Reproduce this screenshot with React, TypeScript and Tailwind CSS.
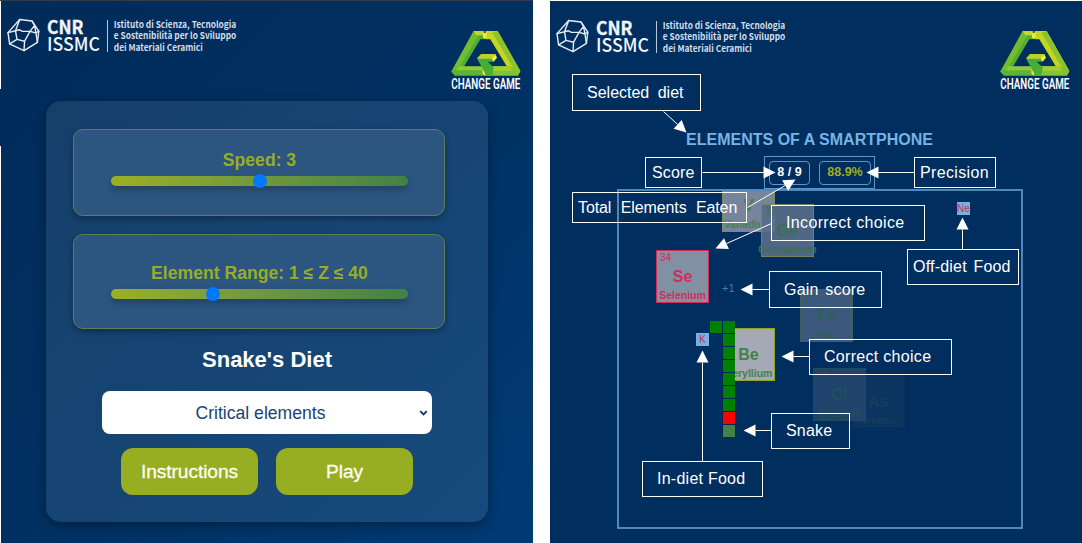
import React from "react";

function CnrLogo() {
  return (
    <svg width="240" height="56" viewBox="0 0 240 56" className="block overflow-visible">
      <g fill="none" stroke="#e6edf5" strokeWidth="1.4" strokeLinejoin="round" strokeLinecap="round">
        <path d="M19.7 19.5 32 21 38.8 31.2 37.4 42.3 24 50.6 9.6 43.8 8 32.6Z" />
        <path d="M19.7 19.5 15.5 30.8 8 32.6M15.5 30.8 19.5 29.8 22 31.2 30 31.4 34.6 25.4 32 21M34.6 25.4 36 33 38.8 31.2M36 33 30 31.4M36 33 37.4 42.3M15.5 30.8 17 39.4 9.6 43.8M17 39.4 24.6 41.2 24 50.6M24.6 41.2 30 31.4" />
      </g>
      <g fill="#f2f6fa" fontFamily="'Noto Sans CJK SC', 'Open Sans', sans-serif">
        <text x="47" y="34.3" fontSize="18.5" fontWeight="700" stroke="#f2f6fa" strokeWidth="0.3" textLength="36.5" lengthAdjust="spacingAndGlyphs">CNR</text>
        <text x="47" y="51" fontSize="18.5" fontWeight="500" textLength="53" lengthAdjust="spacingAndGlyphs">ISSMC</text>
        <g fontSize="9.3" fontWeight="700" fill="#d3deea">
          <text x="113.8" y="27.8" textLength="122.5" lengthAdjust="spacingAndGlyphs">Istituto di Scienza, Tecnologia</text>
          <text x="113.8" y="39.4" textLength="122.5" lengthAdjust="spacingAndGlyphs">e Sostenibilità per lo Sviluppo</text>
          <text x="113.8" y="51" textLength="89" lengthAdjust="spacingAndGlyphs">dei Materiali Ceramici</text>
        </g>
      </g>
      <path d="M107.5 20V52" stroke="#b9c8d9" strokeWidth="1" />
    </svg>
  );
}

function ChangeGameLogo() {
  return (
    <svg width="74" height="62" viewBox="0 0 222 186" className="block overflow-visible">
      <path d="M68 3H100V28H88L40 108 13 137 1 125Z" fill="#4fb034" />
      <path d="M68 3 84 12 14 132 1 125Z" fill="#72bd2e" />
      <path d="M68 3H98L94 16H76Z" fill="#c9d52b" />
      <path d="M104 3H140L208 123 200 137 176 110H168L118 28H104Z" fill="#c5d620" />
      <path d="M140 3 208 123 200 137 124 8Z" fill="#8cc32c" />
      <path d="M94 5 101 10 108 5 106 24 101 28 96 22Z" fill="#f5e83a" />
      <path d="M1 125 24 110H100L104 137H13Z" fill="#5bb432" />
      <path d="M26 109H96L100 121H14Z" fill="#90c83a" />
      <path d="M112 109H176L208 123 200 137H104Z" fill="#84c331" />
      <path d="M124 109H176L186 122H120Z" fill="#a4cf32" />
      <path d="M94 118 104 112 108 126 102 137 95 132Z" fill="#f0e32f" />
      <path d="M78 85 88 78H126L128 95H110L128 112 124 137H106Z" fill="#46ae36" />
      <path d="M78 85 90 72H133L125 86H84Z" fill="#bdd02c" />
      <path d="M133 72 138 83 128 95 122 86Z" fill="#f7ec3d" />
      <text x="1" y="177" fontSize="45" fontWeight="600" fill="#ffffff" fontFamily="Roboto, sans-serif" textLength="207" lengthAdjust="spacingAndGlyphs">CHANGE GAME</text>
    </svg>
  );
}

function Slider({ at }: { at: number }) {
  return (
    <div className="relative h-[9.5px] w-[297px] rounded-full bg-linear-to-r from-[#9bb021] to-[#428147] shadow-[0_4px_6px_rgba(0,0,0,0.22)]">
      <div className="absolute top-[-2.2px] size-[14px] -translate-x-1/2 rounded-full bg-[#0079ff]" style={{ left: at }} />
    </div>
  );
}

function Tile({ className, n, symbol, name }: { className: string; n?: number; symbol: string; name: string }) {
  return (
    <div className={"absolute flex size-[53px] flex-col items-center border-[1.5px] font-bold " + className}>
      <div className="h-[14px] w-full pl-[3px] text-[10px] font-normal leading-[13px]">{n}</div>
      <div className="flex h-[23px] items-center text-[16px] leading-none">{symbol}</div>
      <div className="whitespace-nowrap text-[10.5px] leading-[14px]">{name}</div>
    </div>
  );
}

function Label({ className, children }: { className: string; children: React.ReactNode }) {
  return (
    <div className={"absolute flex items-center whitespace-nowrap border border-white text-[16px] leading-none text-white " + className}>
      {children}
    </div>
  );
}

const snake = [
  "bg-[#008000]",
  "bg-[#008000]",
  "bg-[#008000]",
  "bg-[#008000]",
  "bg-[#008000]",
  "bg-[#008000]",
  "bg-[#008000]",
  "bg-[#ff0000]",
  "bg-[#428148]",
];

const arrows: [number, number, number, number][] = [
  [663, 111, 686, 132],
  [702, 172, 775, 172],
  [914, 172, 866, 172],
  [747, 207, 795, 179],
  [771, 223, 715, 248],
  [769, 289, 740, 289],
  [809, 356, 781, 356],
  [771, 430, 743, 430],
  [702, 461, 702, 350],
  [962, 249, 962, 217],
];

function Arrows() {
  return (
    <svg className="pointer-events-none absolute inset-0" width="1082" height="543" viewBox="0 0 1082 543">
      {arrows.map(([x1, y1, x2, y2], i) => {
        const d = Math.hypot(x2 - x1, y2 - y1);
        const ux = (x2 - x1) / d;
        const uy = (y2 - y1) / d;
        const bx = x2 - ux * 12;
        const by = y2 - uy * 12;
        return (
          <g key={i} transform="translate(0.5 0.5)">
            <path d={`M${x1} ${y1}L${bx} ${by}`} stroke="#fff" strokeWidth="1" />
            <path d={`M${x2} ${y2}L${bx - uy * 6} ${by + ux * 6}L${bx + uy * 6} ${by - ux * 6}Z`} fill="#fff" />
          </g>
        );
      })}
    </svg>
  );
}

function SettingsPanel() {
  return (
    <section className="flex h-[543px] w-[533px] flex-col border-t border-[#343b47] bg-linear-135 from-[#002b59] via-[#003062] to-[#003b75]">
      <header className="flex h-[100px] shrink-0 justify-between">
        <div className="-mt-px"><CnrLogo /></div>
        <div className="mr-[8px] mt-[29px]"><ChangeGameLogo /></div>
      </header>
      <main className="ml-[46px] flex h-[421px] w-[442px] flex-col items-center rounded-[15px] bg-linear-135 from-[#153f69] to-[#164a7d] pt-[28px] shadow-[0_4px_12px_rgba(0,0,0,0.35)]">
        <div className="mr-[16px] flex h-[87px] w-[372px] flex-col items-center gap-[5px] rounded-[10px] border border-[#5c7f58] bg-[#2c557f] pt-[19px] shadow-[0_3px_6px_rgba(0,0,0,0.3)]">
          <div className="pl-px text-[17.6px] font-bold leading-[22px] text-[#97ae24]">Speed: 3</div>
          <Slider at={149.3} />
        </div>
        <div className="mr-[16px] mt-[18px] flex h-[95px] w-[372px] flex-col items-center gap-[5px] rounded-[10px] border border-[#5c7f58] bg-[#2c557f] pt-[27px] shadow-[0_3px_6px_rgba(0,0,0,0.3)]">
          <div className="pl-px text-[17.6px] font-bold leading-[22px] text-[#97ae24]">Element Range: 1 ≤ Z ≤ 40</div>
          <Slider at={102.3} />
        </div>
        <h2 className="mt-[18px] text-[22px] font-bold leading-[26px] text-white">Snake's Diet</h2>
        <div className="mt-[18px] flex h-[43px] w-[330px] items-center rounded-[8px] bg-white pr-[4px] text-[17.6px] text-[#1c4270]">
          <span className="flex-1 pt-px text-center">Critical elements</span>
          <svg width="9" height="6" viewBox="0 0 9 6" className="block"><path d="M1.2 1.2 4.5 4.5 7.8 1.2" fill="none" stroke="#143763" strokeWidth="1.9" /></svg>
        </div>
        <div className="mt-[14px] flex gap-[18px] text-[19.2px] text-[#fdfdf3]">
          <button className="h-[47px] w-[137px] rounded-[12px] bg-[#97ae22] pt-px tracking-[-0.1px] [-webkit-text-stroke:0.3px_#fdfdf3]">Instructions</button>
          <button className="h-[47px] w-[137px] rounded-[12px] bg-[#97ae22] pt-px tracking-[-0.1px] [-webkit-text-stroke:0.3px_#fdfdf3]">Play</button>
        </div>
      </main>
    </section>
  );
}

function GamePanel() {
  return (
    <section className="mt-px flex h-[542px] w-[532px] flex-col bg-[#002e5f]">
      <header className="flex h-[126px] shrink-0 justify-between">
        <div className="-ml-px"><CnrLogo /></div>
        <div className="mr-[8px] mt-[29px]"><ChangeGameLogo /></div>
      </header>
      <h1 className="h-[29px] pr-[13px] text-center text-[16px] font-bold leading-[25px] text-[#77b3e4]">ELEMENTS OF A SMARTPHONE</h1>
      <div className="ml-[214px] flex h-[33px] w-[111px] shrink-0 items-center gap-[9px] border-[1.5px] border-[#5b97cb] pl-[4px] text-[12.5px] font-bold">
        <div className="flex h-[24px] w-[41px] items-center justify-center rounded-[4px] border border-[#5b97cb] text-white">8 / 9</div>
        <div className="flex h-[24px] w-[52px] items-center justify-center rounded-[4px] border border-[#5b97cb] text-[#a3aa27]">88.9%</div>
      </div>
      <div className="relative ml-[67px] h-[340px] w-[406px] overflow-hidden border-2 border-[#5188bb]">
        <Tile className="left-[103px] top-[-12px] border-[#7f8c55] bg-[#76859b] text-[#477f55]" symbol="V" name="Vanadium" />
        <Tile className="left-[142px] top-[13px] border-[#7a8650]/90 bg-[#586d8a]/90 text-[#3c7052]" n={32} symbol="Ge" name="Germanium" />
        <Tile className="left-[37px] top-[59px] border-[#d42c58] bg-[#8290a4] text-[#d42c58]" n={34} symbol="Se" name="Selenium" />
        <Tile className="left-[181px] top-[98px] border-[#3f6358] bg-[#3c597d] text-[#2d6058]" n={26} symbol="Fe" name="Iron" />
        <Tile className="left-[233px] top-[184px] border-[#112f52] bg-[#0b3461] text-[#153e5b]" symbol="As" name="Arsenic" />
        <Tile className="left-[194px] top-[177px] border-[#204a61] bg-[#22456f]/95 text-[#214f5a]" n={17} symbol="Cl" name="Chlorine" />
        <Tile className="left-[103px] top-[137px] border-[#91a51d] bg-[#a5a9b7] text-[#428148]" symbol="Be" name="Beryllium" />
        <div className="absolute left-[91px] top-[130px] flex items-start">
          <div className="mr-px size-[12px] bg-[#008000]" />
          <div className="-ml-px flex flex-col gap-px bg-[#00275a] pl-px">
            {snake.map((color, i) => (
              <div key={i} className={"size-[12px] " + color} />
            ))}
          </div>
        </div>
        <div className="absolute left-[77px] top-[142px] flex size-[13px] items-center justify-center bg-[#75b1e1] text-[10px] text-[#d42c58]">K</div>
        <div className="absolute left-[338px] top-[11px] flex size-[13px] items-center justify-center bg-[#75b1e1] text-[10px] text-[#d42c58]">Ne</div>
        <div className="absolute left-[103px] top-[91px] text-[11px] leading-[13px] text-[#427cb2]">+1</div>
      </div>
    </section>
  );
}

export default function App() {
  return (
    <div className="relative flex h-[543px] w-[1082px] justify-between overflow-hidden bg-white font-['Liberation_Sans',Arial,sans-serif]">
      <SettingsPanel />
      <div className="absolute left-0 top-px h-[88px] w-px bg-white" />
      <div className="absolute left-0 top-[146px] h-[397px] w-px bg-white" />
      <GamePanel />
      <Label className="left-[572px] top-[74px] h-[37px] w-[129px] pl-[14px] [word-spacing:4px]">Selected diet</Label>
      <Label className="left-[645px] top-[157px] h-[31px] w-[57px] pl-[6px] tracking-[0.15px]">Score</Label>
      <Label className="left-[914px] top-[157px] h-[31px] w-[82px] pl-[5px] tracking-[0.35px]">Precision</Label>
      <Label className="left-[572px] top-[192px] h-[31px] w-[175px] pl-[5px] tracking-[-0.1px] [word-spacing:5px]">Total Elements Eaten</Label>
      <Label className="left-[771px] top-[205px] h-[36px] w-[154px] pl-[14px] tracking-[0.35px]">Incorrect choice</Label>
      <Label className="left-[907px] top-[249px] h-[36px] w-[112px] pl-[5px] tracking-[0.2px] [word-spacing:2px]">Off-diet Food</Label>
      <Label className="left-[769px] top-[271px] h-[37px] w-[113px] pl-[14px] tracking-[0.2px] [word-spacing:2px]">Gain score</Label>
      <Label className="left-[809px] top-[339px] h-[36px] w-[143px] pl-[14px] tracking-[0.3px]">Correct choice</Label>
      <Label className="left-[771px] top-[413px] h-[36px] w-[79px] pl-[14px] tracking-[0.2px]">Snake</Label>
      <Label className="left-[642px] top-[461px] h-[36px] w-[121px] pl-[14px] tracking-[0.25px]">In-diet Food</Label>
      <Arrows />
    </div>
  );
}
